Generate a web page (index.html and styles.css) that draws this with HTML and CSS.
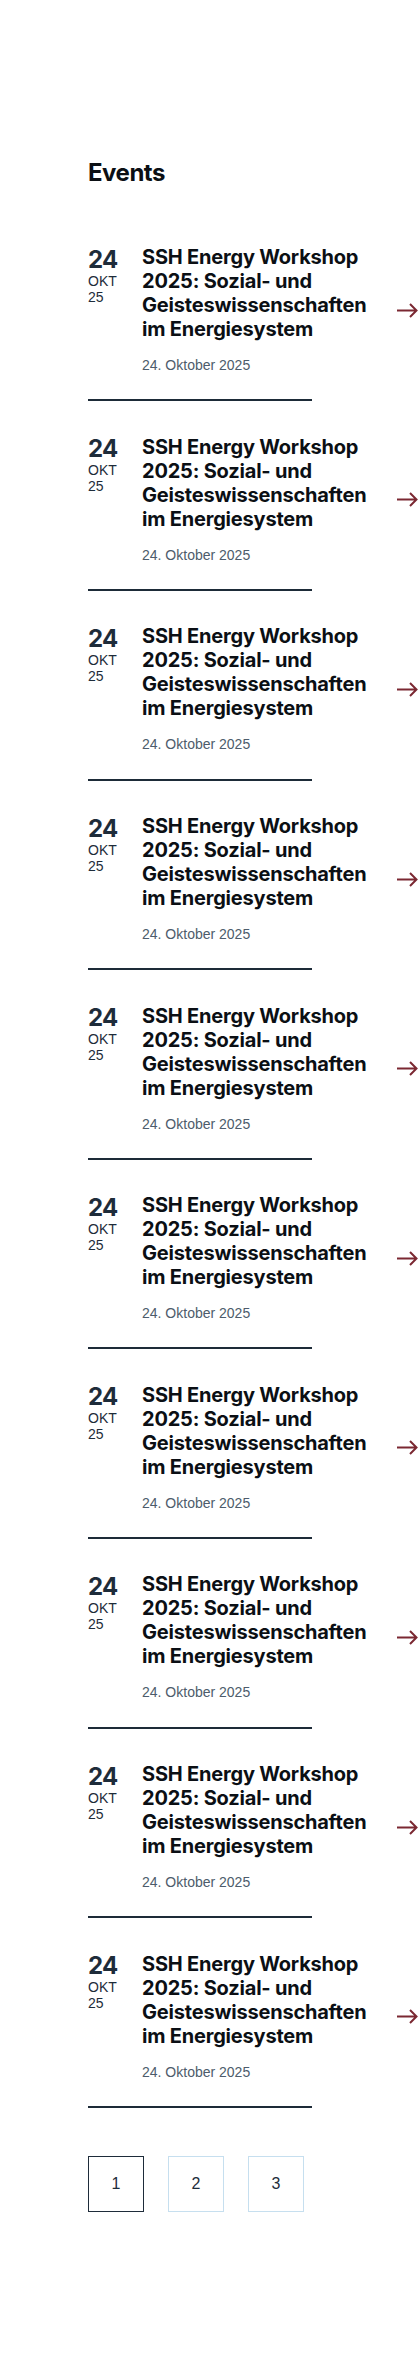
FILE: index.html
```html
<!DOCTYPE html>
<html lang="de">
<head>
<meta charset="utf-8">
<title>Events</title>
<link rel="stylesheet" href="styles.css">
</head>
<body>
<main class="events">
  <h1 class="events__title">Events</h1>
  <ul class="event-list">
    <li class="event">
      <a class="event__row" href="#">
        <div class="event__date"><span class="event__day">24</span><span class="event__month">OKT</span><span class="event__year">25</span></div>
        <div class="event__body"><h2 class="event__name">SSH Energy Workshop 2025: Sozial- und Geisteswissenschaften im Energiesystem</h2><p class="event__when">24. Oktober 2025</p></div>
        <svg class="event__arrow" width="21" height="15" viewBox="0 0 21 15" aria-hidden="true"><path d="M0 7.5H19.5M13 1L19.5 7.5L13 14" fill="none" stroke="currentColor" stroke-width="2"/></svg>
      </a>
      <div class="event__divider"></div>
    </li>
    <li class="event">
      <a class="event__row" href="#">
        <div class="event__date"><span class="event__day">24</span><span class="event__month">OKT</span><span class="event__year">25</span></div>
        <div class="event__body"><h2 class="event__name">SSH Energy Workshop 2025: Sozial- und Geisteswissenschaften im Energiesystem</h2><p class="event__when">24. Oktober 2025</p></div>
        <svg class="event__arrow" width="21" height="15" viewBox="0 0 21 15" aria-hidden="true"><path d="M0 7.5H19.5M13 1L19.5 7.5L13 14" fill="none" stroke="currentColor" stroke-width="2"/></svg>
      </a>
      <div class="event__divider"></div>
    </li>
    <li class="event">
      <a class="event__row" href="#">
        <div class="event__date"><span class="event__day">24</span><span class="event__month">OKT</span><span class="event__year">25</span></div>
        <div class="event__body"><h2 class="event__name">SSH Energy Workshop 2025: Sozial- und Geisteswissenschaften im Energiesystem</h2><p class="event__when">24. Oktober 2025</p></div>
        <svg class="event__arrow" width="21" height="15" viewBox="0 0 21 15" aria-hidden="true"><path d="M0 7.5H19.5M13 1L19.5 7.5L13 14" fill="none" stroke="currentColor" stroke-width="2"/></svg>
      </a>
      <div class="event__divider"></div>
    </li>
    <li class="event">
      <a class="event__row" href="#">
        <div class="event__date"><span class="event__day">24</span><span class="event__month">OKT</span><span class="event__year">25</span></div>
        <div class="event__body"><h2 class="event__name">SSH Energy Workshop 2025: Sozial- und Geisteswissenschaften im Energiesystem</h2><p class="event__when">24. Oktober 2025</p></div>
        <svg class="event__arrow" width="21" height="15" viewBox="0 0 21 15" aria-hidden="true"><path d="M0 7.5H19.5M13 1L19.5 7.5L13 14" fill="none" stroke="currentColor" stroke-width="2"/></svg>
      </a>
      <div class="event__divider"></div>
    </li>
    <li class="event">
      <a class="event__row" href="#">
        <div class="event__date"><span class="event__day">24</span><span class="event__month">OKT</span><span class="event__year">25</span></div>
        <div class="event__body"><h2 class="event__name">SSH Energy Workshop 2025: Sozial- und Geisteswissenschaften im Energiesystem</h2><p class="event__when">24. Oktober 2025</p></div>
        <svg class="event__arrow" width="21" height="15" viewBox="0 0 21 15" aria-hidden="true"><path d="M0 7.5H19.5M13 1L19.5 7.5L13 14" fill="none" stroke="currentColor" stroke-width="2"/></svg>
      </a>
      <div class="event__divider"></div>
    </li>
    <li class="event">
      <a class="event__row" href="#">
        <div class="event__date"><span class="event__day">24</span><span class="event__month">OKT</span><span class="event__year">25</span></div>
        <div class="event__body"><h2 class="event__name">SSH Energy Workshop 2025: Sozial- und Geisteswissenschaften im Energiesystem</h2><p class="event__when">24. Oktober 2025</p></div>
        <svg class="event__arrow" width="21" height="15" viewBox="0 0 21 15" aria-hidden="true"><path d="M0 7.5H19.5M13 1L19.5 7.5L13 14" fill="none" stroke="currentColor" stroke-width="2"/></svg>
      </a>
      <div class="event__divider"></div>
    </li>
    <li class="event">
      <a class="event__row" href="#">
        <div class="event__date"><span class="event__day">24</span><span class="event__month">OKT</span><span class="event__year">25</span></div>
        <div class="event__body"><h2 class="event__name">SSH Energy Workshop 2025: Sozial- und Geisteswissenschaften im Energiesystem</h2><p class="event__when">24. Oktober 2025</p></div>
        <svg class="event__arrow" width="21" height="15" viewBox="0 0 21 15" aria-hidden="true"><path d="M0 7.5H19.5M13 1L19.5 7.5L13 14" fill="none" stroke="currentColor" stroke-width="2"/></svg>
      </a>
      <div class="event__divider"></div>
    </li>
    <li class="event">
      <a class="event__row" href="#">
        <div class="event__date"><span class="event__day">24</span><span class="event__month">OKT</span><span class="event__year">25</span></div>
        <div class="event__body"><h2 class="event__name">SSH Energy Workshop 2025: Sozial- und Geisteswissenschaften im Energiesystem</h2><p class="event__when">24. Oktober 2025</p></div>
        <svg class="event__arrow" width="21" height="15" viewBox="0 0 21 15" aria-hidden="true"><path d="M0 7.5H19.5M13 1L19.5 7.5L13 14" fill="none" stroke="currentColor" stroke-width="2"/></svg>
      </a>
      <div class="event__divider"></div>
    </li>
    <li class="event">
      <a class="event__row" href="#">
        <div class="event__date"><span class="event__day">24</span><span class="event__month">OKT</span><span class="event__year">25</span></div>
        <div class="event__body"><h2 class="event__name">SSH Energy Workshop 2025: Sozial- und Geisteswissenschaften im Energiesystem</h2><p class="event__when">24. Oktober 2025</p></div>
        <svg class="event__arrow" width="21" height="15" viewBox="0 0 21 15" aria-hidden="true"><path d="M0 7.5H19.5M13 1L19.5 7.5L13 14" fill="none" stroke="currentColor" stroke-width="2"/></svg>
      </a>
      <div class="event__divider"></div>
    </li>
    <li class="event">
      <a class="event__row" href="#">
        <div class="event__date"><span class="event__day">24</span><span class="event__month">OKT</span><span class="event__year">25</span></div>
        <div class="event__body"><h2 class="event__name">SSH Energy Workshop 2025: Sozial- und Geisteswissenschaften im Energiesystem</h2><p class="event__when">24. Oktober 2025</p></div>
        <svg class="event__arrow" width="21" height="15" viewBox="0 0 21 15" aria-hidden="true"><path d="M0 7.5H19.5M13 1L19.5 7.5L13 14" fill="none" stroke="currentColor" stroke-width="2"/></svg>
      </a>
      <div class="event__divider"></div>
    </li>
  </ul>
  <nav class="pagination" aria-label="Seiten">
    <a class="pagination__item pagination__item--active" href="#">1</a>
    <a class="pagination__item" href="#">2</a>
    <a class="pagination__item" href="#">3</a>
  </nav>
</main>
</body>
</html>
```

FILE: styles.css
```css
html, body {
  margin: 0;
  padding: 0;
  background: #ffffff;
}

body {
  font-family: "Liberation Sans", Arial, sans-serif;
  color: #1e2c3a;
}

.events {
  padding: 159px 0 160px 88px;
}

.events__title {
  margin: 0 0 24px;
  font-family: Inter, "Noto Sans", sans-serif;
  font-weight: 700;
  font-size: 24px;
  line-height: 28.8px;
  letter-spacing: -0.02em;
  color: #0b0f14;
}

.event-list {
  list-style: none;
  margin: 0;
  padding: 0;
}

.event {
  padding-top: 33.5px;
}

.event__row {
  display: flex;
  align-items: center;
  gap: 24px;
  padding-right: 2px;
  text-decoration: none;
  color: inherit;
}

.event__date {
  align-self: flex-start;
  flex: 0 0 30px;
  display: flex;
  flex-direction: column;
  padding-top: 0.5px;
}

.event__day {
  font-family: Inter, "Noto Sans", sans-serif;
  font-weight: 700;
  font-size: 24px;
  line-height: 27px;
  letter-spacing: -0.03em;
  color: #1e2c3a;
}

.event__month,
.event__year {
  font-size: 14px;
  line-height: 16px;
  color: #1e2c3a;
}

.event__body {
  flex: 1 1 auto;
  min-width: 0;
}

.event__name {
  margin: 0;
  font-family: Inter, "Noto Sans", sans-serif;
  font-weight: 700;
  font-size: 20px;
  line-height: 24px;
  letter-spacing: -0.01em;
  color: #0b0f14;
}

.event__when {
  margin: 14px 0 0;
  font-size: 14px;
  line-height: 20px;
  color: #4d5c6b;
}

.event__arrow {
  flex: 0 0 21px;
  color: #7b2832;
}

.event__divider {
  width: 224px;
  height: 2px;
  margin-top: 24.1px;
  background: #1d2b38;
}

.pagination {
  display: flex;
  gap: 24px;
  margin-top: 48px;
}

.pagination__item {
  box-sizing: border-box;
  width: 56px;
  height: 56px;
  display: flex;
  align-items: center;
  justify-content: center;
  border: 1px solid #c6dfef;
  font-size: 16px;
  color: #1e2c3a;
  text-decoration: none;
}

.pagination__item--active {
  border-color: #1e2c3a;
}
```
